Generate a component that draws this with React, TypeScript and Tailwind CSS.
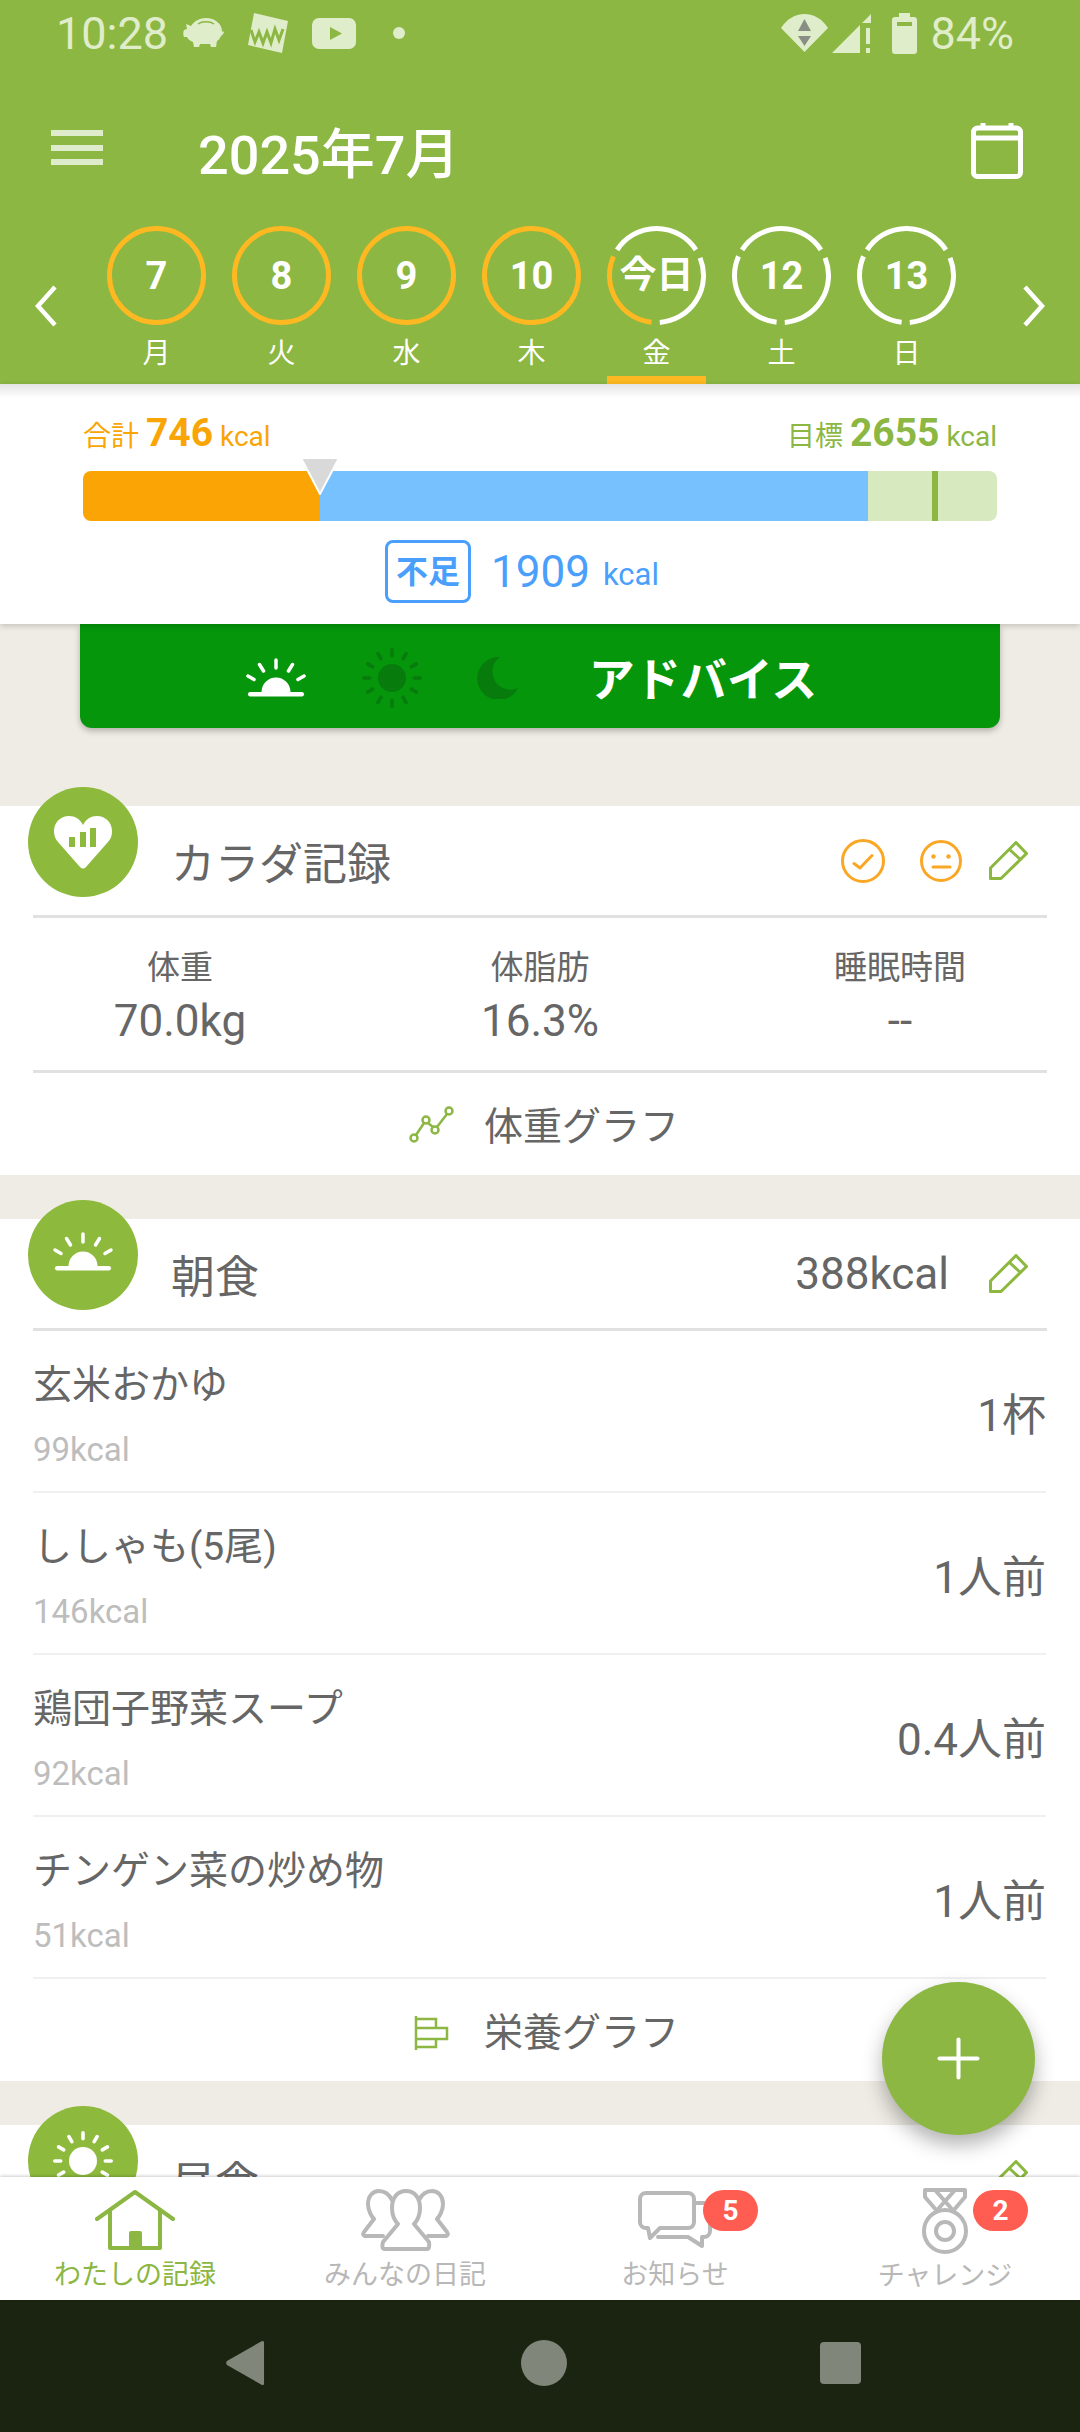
import React from "react";
import { Plus } from "lucide-react";

const days = [
  { d: "7", w: "月", state: "done" },
  { d: "8", w: "火", state: "done" },
  { d: "9", w: "水", state: "done" },
  { d: "10", w: "木", state: "done" },
  { d: "今日", w: "金", state: "today" },
  { d: "12", w: "土", state: "future" },
  { d: "13", w: "日", state: "future" },
];

const arc = (from: number, to: number, r = 47) => {
  const pt = (a: number) => {
    const rad = ((a - 90) * Math.PI) / 180;
    return `${49.5 + r * Math.cos(rad)} ${49.5 + r * Math.sin(rad)}`;
  };
  return `M${pt(from)} A${r} ${r} 0 0 1 ${pt(to)}`;
};

const Ring = ({ state }: { state: string }) => {
  const orange = "#fdb822";
  if (state === "done") {
    return (
      <svg width="99" height="99" className="absolute inset-0">
        <circle cx="49.5" cy="49.5" r="47" fill="none" stroke={orange} strokeWidth="5" />
      </svg>
    );
  }
  return (
    <svg width="99" height="99" className="absolute inset-0">
      <path d={arc(-57, 57)} fill="none" stroke="#fff" strokeWidth="5" />
      <path d={arc(68, 176)} fill="none" stroke="#fff" strokeWidth="5" />
      <path d={arc(186, 294)} fill="none" stroke={state === "today" ? orange : "#fff"} strokeWidth="5" />
    </svg>
  );
};

const Sunrise = ({ color }: { color: string }) => (
  <svg width="62" height="39" viewBox="0 0 62 39" fill={color} stroke="none">
    <path d="M16.500 34a14.500 14.500 0 0 1 29 0z" />
    <rect x="3" y="34" width="56" height="4.500" rx="2.200" />
    <g stroke={color} strokeWidth="3.500" strokeLinecap="round">
      <path d="M31 2v8M14.500 6.500l4 6.500M47.500 6.500l-4 6.500M3 18l6 3.500M59 18l-6 3.500" />
    </g>
  </svg>
);

const Sun = ({ color }: { color: string }) => (
  <svg width="62" height="62" viewBox="0 0 62 62" fill={color}>
    <circle cx="31" cy="31" r="14" />
    {[0, 30, 60, 90, 120, 150, 180, 210, 240, 270, 300, 330].map((a) => (
      <rect key={a} x="29.200" y="1" width="3.600" height="9.500" rx="1.800" transform={`rotate(${a} 31 31)`} />
    ))}
  </svg>
);

const EditIcon = () => (
  <svg width="39" height="39" viewBox="0 0 39 39" fill="none" stroke="#8cb83f" strokeWidth="3" strokeLinejoin="round">
    <path d="M1.500 27V37.500H12L37.500 12.500 27 1.500z" />
    <path d="M20 8l12 11" />
  </svg>
);

const SectionHeader = ({
  icon,
  title,
  right,
}: {
  icon: React.ReactNode;
  title: string;
  right: React.ReactNode;
}) => (
  <div className="relative h-[109px] bg-white">
    <div className="absolute left-[28px] top-[-19px] flex h-[110px] w-[110px] items-center justify-center rounded-full bg-[#8dba3c]">
      {icon}
    </div>
    <div className="flex h-[109px] items-center justify-between pl-[171px] pr-[52px]">
      <span className="pt-[8px] text-[44px] leading-none text-[#666666]">{title}</span>
      {right}
    </div>
  </div>
);

const foods = [
  { name: "玄米おかゆ", kcal: "99kcal", qty: "1杯" },
  { name: "ししゃも(5尾)", kcal: "146kcal", qty: "1人前" },
  { name: "鶏団子野菜スープ", kcal: "92kcal", qty: "0.4人前" },
  { name: "チンゲン菜の炒め物", kcal: "51kcal", qty: "1人前" },
];

export default function App() {
  return (
    <div className="relative flex h-[2432px] w-[1080px] flex-col overflow-hidden bg-[#efece5] font-['Roboto','Noto_Sans_CJK_JP',sans-serif]">
      {/* header */}
      <div className="h-[384px] shrink-0 bg-[#8bb742] text-white">
        <div className="flex h-[66px] items-center justify-between pl-[56px] pr-[66px] text-[#e0edcb]">
          <div className="flex items-center">
            <span className="text-[45px] leading-none">10:28</span>
            <svg width="41" height="30" viewBox="0 0 41 30" fill="#e0edcb" className="ml-[15px]">
              <path d="M8 8C11 3 17 0 23 0c9 0 16 6 16 13 0 1 2 1 2 0 0 3-2 4-3 5-1 2-2 4-4 5l-1 6h-5l-1-3H17l-1 3h-5l-1-5c-3-1-5-3-6-5H1c-1-2-1-5 0-7l3-1-1-5z" />
              <path d="M15 6c4-3 12-3 16 0" stroke="#8bb742" strokeWidth="1.500" fill="none" />
            </svg>
            <svg width="40" height="40" viewBox="0 0 40 40" className="ml-[24px]">
              <path d="M6 0 40 8 34 40 0 32z" fill="#e0edcb" />
              <path d="M3 17l4 12 4-10 4 11 4-11 4 11 4-14 4 11 4-11" stroke="#8bb742" strokeWidth="3" fill="none" />
            </svg>
            <svg width="44" height="31" viewBox="0 0 44 31" className="ml-[24px]">
              <rect width="44" height="31" rx="7" fill="#e0edcb" />
              <path d="M18 9v13l12-6.500z" fill="#8bb742" />
            </svg>
            <div className="ml-[37px] h-[12px] w-[12px] rounded-full bg-[#e0edcb]" />
          </div>
          <div className="flex items-center">
            <svg width="47" height="38" viewBox="0 0 47 38">
              <path d="M0 14C6 5 14 0 23.500 0S41 5 47 14L23.500 38z" fill="#e0edcb" />
              <path d="M23.500 5 30 17H17zM17 22h13l-6.500 10z" fill="#8a8f86" />
            </svg>
            <svg width="39" height="39" viewBox="0 0 39 39" fill="#e0edcb" className="ml-[4px]">
              <path d="M0 39 28 11v28zM30 9 39 0v9z" />
              <rect x="34" y="14" width="4" height="16" />
              <rect x="34" y="34" width="4" height="5" />
            </svg>
            <svg width="25" height="41" viewBox="0 0 25 41" className="ml-[21px]">
              <path d="M7 0h11v4h4a3 3 0 0 1 3 3v31a3 3 0 0 1-3 3H3a3 3 0 0 1-3-3V7a3 3 0 0 1 3-3h4z" fill="#e0edcb" />
              <rect x="5" y="9" width="15" height="4" fill="#8bb742" />
            </svg>
            <span className="ml-[13px] text-[45px] leading-none">84%</span>
          </div>
        </div>

        <div className="mt-[27px] flex h-[115px] items-center justify-between pl-[51px] pr-[57px]">
          <div className="flex items-center">
            <div className="mb-[6px] flex h-[35px] w-[52px] flex-col justify-between">
              <div className="h-[6px] bg-[#dfeccb]" />
              <div className="h-[6px] bg-[#dfeccb]" />
              <div className="h-[6px] bg-[#dfeccb]" />
            </div>
            <span className="ml-[95px] mt-[10px] text-[54px] font-medium leading-none">2025年7月</span>
          </div>
          <svg width="52" height="56" viewBox="0 0 52 56" fill="none" stroke="#fff" strokeWidth="5">
            <rect x="2.500" y="5" width="47" height="48.500" rx="4" />
            <path d="M2.500 15h47" />
            <path d="M12 0v7M40 0v7" />
          </svg>
        </div>

        <div className="flex h-[176px] pt-[18px]">
          <div className="relative w-[94px]">
            <svg width="26" height="44" viewBox="0 0 26 44" fill="none" stroke="#fff" strokeWidth="4.500" className="absolute left-[33px] top-[58px]">
              <path d="M22 3 5 22l17 19" />
            </svg>
          </div>
          {days.map((day) => (
            <div key={day.w} className="relative flex w-[125px] flex-col items-center">
              <div className="relative flex h-[99px] w-[99px] items-center justify-center">
                <Ring state={day.state} />
                <span className={`${day.state === "today" ? "text-[37px]" : "text-[38px]"} font-bold leading-none`}>{day.d}</span>
              </div>
              <span className="mt-[15px] text-[28px] leading-none">{day.w}</span>
              {day.state === "today" && <div className="absolute left-[13px] top-[150px] h-[8px] w-[99px] bg-[#fdb822]" />}
            </div>
          ))}
          <div className="relative flex-1">
            <svg width="26" height="44" viewBox="0 0 26 44" fill="none" stroke="#fff" strokeWidth="4.500" className="absolute left-[52px] top-[58px]">
              <path d="M4 3l17 19L4 41" />
            </svg>
          </div>
        </div>
      </div>

      {/* kcal summary */}
      <div className="relative z-10 h-[240px] shrink-0 bg-white px-[83px] pt-[30px] shadow-[0_2px_6px_rgba(0,0,0,0.18)]">
        <div className="pointer-events-none absolute inset-x-0 top-0 h-[14px] bg-gradient-to-b from-[#e4e4e4] to-white" />
        <div className="relative flex items-end justify-between leading-none">
          <div className="text-[#f9a505]">
            <span className="text-[28px]">合計 </span>
            <span className="text-[39px] font-bold">746</span>
            <span className="text-[28px]"> kcal</span>
          </div>
          <div className="text-[#8bb742]">
            <span className="text-[28px]">目標 </span>
            <span className="text-[39px] font-bold">2655</span>
            <span className="text-[28px]"> kcal</span>
          </div>
        </div>
        <div className="relative mt-[18px] flex h-[50px] overflow-hidden rounded-[8px]">
          <div className="w-[237px] bg-[#faa505]" />
          <div className="w-[548px] bg-[#77c1ff]" />
          <div className="flex-1 bg-[#d7eabf]" />
          <div className="absolute left-[849px] top-0 h-full w-[6px] bg-[#8bb742]" />
        </div>
        <svg width="40" height="38" viewBox="0 0 40 38" className="absolute left-[300px] top-[73px]">
          <path d="M1 1h38L20 37z" fill="#d9d9d9" stroke="#fff" strokeWidth="2" />
        </svg>
        <div className="mt-[19px] flex items-center justify-center pr-[36px]">
          <span className="flex h-[63px] w-[86px] items-center justify-center rounded-[8px] border-[3px] border-[#4a9ffc] text-[32px] font-bold leading-none text-[#4a9ffc]">不足</span>
          <span className="ml-[20px] text-[44px] leading-none text-[#4a9ffc]">1909</span>
          <span className="ml-[13px] mt-[5px] text-[31px] leading-none text-[#4a9ffc]">kcal</span>
        </div>
      </div>

      {/* scroll area */}
      <div className="min-h-0 flex-1 overflow-hidden">
        <div className="mx-[80px] flex h-[104px] items-center justify-center rounded-b-[12px] bg-[#05960b] pr-[18px] pt-[3px] shadow-[0_3px_6px_rgba(0,0,0,0.25)]">
          <Sunrise color="#ffffff" />
          <div className="ml-[54px]">
            <Sun color="#077c0d" />
          </div>
          <svg width="41" height="43" viewBox="0 0 41 43" fill="#077c0d" className="ml-[54px]">
            <path d="M23 1A21.500 21.500 0 1 0 41 32 18 18 0 0 1 23 1z" />
          </svg>
          <span className="ml-[71px] mt-[5px] text-[46px] font-bold leading-none text-white">アドバイス</span>
        </div>

        {/* body record */}
        <div className="mt-[78px] bg-white">
          <SectionHeader
            title="カラダ記録"
            icon={
              <svg width="58" height="53" viewBox="0 0 58 53">
                <path d="M29 9C26 3 21 0 15 0 6 0 0 7 0 15c0 4 1 8 4 11l22 25c2 2 4 2 6 0l22-25c3-3 4-7 4-11 0-8-6-15-15-15-6 0-11 3-14 9z" fill="#fff" />
                <rect x="15" y="21" width="6" height="10" fill="#8dba3c" />
                <rect x="26" y="16" width="6" height="15" fill="#8dba3c" />
                <rect x="36" y="12" width="6" height="19" fill="#8dba3c" />
              </svg>
            }
            right={
              <div className="flex items-center">
                <svg width="44" height="44" viewBox="0 0 44 44" fill="none" stroke="#fba726" strokeWidth="3" strokeLinecap="round" strokeLinejoin="round">
                  <circle cx="22" cy="22" r="20.500" />
                  <path d="M13 24.500 19 29 31 16.500" />
                </svg>
                <svg width="42" height="42" viewBox="0 0 42 42" fill="none" stroke="#fba726" strokeWidth="3" strokeLinecap="round" className="ml-[35px]">
                  <circle cx="21" cy="21" r="19.500" />
                  <path d="M13 27h17" />
                  <circle cx="13.500" cy="16.500" r="2.200" fill="#fba726" stroke="none" />
                  <circle cx="28.500" cy="16.500" r="2.200" fill="#fba726" stroke="none" />
                </svg>
                <div className="ml-[27px]">
                  <EditIcon />
                </div>
              </div>
            }
          />
          <div className="mx-[33px] h-[3px] bg-[#e1e1e1]" />
          <div className="grid h-[152px] grid-cols-3 content-center pt-[6px]">
            {[
              ["体重", "70.0kg"],
              ["体脂肪", "16.3%"],
              ["睡眠時間", "--"],
            ].map(([label, value]) => (
              <div key={label} className="flex flex-col items-center text-[#666666]">
                <span className="text-[33px] leading-none">{label}</span>
                <span className="mt-[15px] text-[44px] leading-none">{value}</span>
              </div>
            ))}
          </div>
          <div className="mx-[33px] h-[3px] bg-[#e1e1e1]" />
          <div className="flex h-[102px] items-center justify-center pl-[8px] pt-[6px]">
            <svg width="45" height="38" viewBox="0 0 45 38" fill="none" stroke="#8bb742" strokeWidth="2.500" className="mb-[4px]">
              <circle cx="5" cy="32" r="3.500" />
              <circle cx="17" cy="14" r="3.500" />
              <circle cx="26" cy="24" r="3.500" />
              <circle cx="40" cy="5" r="3.500" />
              <path d="M7 29 15 17M19 17 24 21M28 21 38 8" />
            </svg>
            <span className="ml-[30px] text-[39px] leading-none text-[#666666]">体重グラフ</span>
          </div>
        </div>

        {/* breakfast */}
        <div className="mt-[44px] bg-white">
          <SectionHeader
            title="朝食"
            icon={
              <div className="mb-[8px]">
                <Sunrise color="#ffffff" />
              </div>
            }
            right={
              <div className="flex items-center">
                <span className="text-[44px] leading-none text-[#666666]">388kcal</span>
                <div className="ml-[40px]">
                  <EditIcon />
                </div>
              </div>
            }
          />
          <div className="mx-[33px] h-[3px] bg-[#e1e1e1]" />
          {foods.map((food) => (
            <div key={food.name} className="ml-[33px] mr-[34px] flex h-[162px] items-center justify-between border-b-[2px] border-[#f0f0f0] pt-[10px]">
              <div className="flex flex-col">
                <span className="text-[39px] leading-none text-[#666666]">{food.name}</span>
                <span className="mt-[28px] text-[33px] leading-none text-[#bdbdbd]">{food.kcal}</span>
              </div>
              <span className="text-[44px] leading-none text-[#666666]">{food.qty}</span>
            </div>
          ))}
          <div className="flex h-[102px] items-center justify-center pl-[13px] pt-[6px]">
            <svg width="35" height="34" viewBox="0 0 35 34" fill="none" stroke="#8bb742" strokeWidth="2.500">
              <path d="M2 0v34M2 3h20v9H2M2 12h31v11H2M2 23h20v8H2" />
            </svg>
            <span className="ml-[35px] text-[39px] leading-none text-[#666666]">栄養グラフ</span>
          </div>
        </div>

        {/* lunch */}
        <div className="mt-[44px] bg-white">
          <SectionHeader
            title="昼食"
            icon={<Sun color="#ffffff" />}
            right={<EditIcon />}
          />
        </div>
      </div>

      {/* bottom tabs */}
      <div className="relative z-10 grid h-[123px] shrink-0 grid-cols-4 bg-white shadow-[0_-1px_3px_rgba(0,0,0,0.2)]">
        <div className="flex flex-col items-center pt-[13px]">
          <svg width="80" height="60" viewBox="0 0 80 60" fill="none" stroke="#8bb742" strokeWidth="4" strokeLinejoin="round" strokeLinecap="round">
            <path d="M2 29 40 2l38 27" />
            <path d="M15 21v37h50V21" />
            <path d="M36 58V43h9v15z" fill="#8bb742" />
          </svg>
          <span className="mt-[12px] text-[27px] leading-none text-[#8bb742]">わたしの記録</span>
        </div>
        <div className="flex flex-col items-center pt-[11px]">
          <svg width="89" height="64" viewBox="0 0 89 64" fill="none" stroke="#b8b8b8" strokeWidth="4" strokeLinejoin="round" strokeLinecap="round">
            <path d="M31 20C31 9 37 3 45 3S59 9 59 20C59 27 56 33 53 36L68 54Q69 61 66 61H24Q20 61 22 54L37 36C34 33 31 27 31 20z" />
            <path d="M31 12C28 6 23 3 18 3 12 3 7 8 7 16 7 23 11 29 13 31L3 44Q1 47 4 48H22" />
            <path d="M58 12C61 6 66 3 71 3 77 3 82 8 82 16 82 23 78 29 76 31L86 44Q88 47 85 48H67" />
          </svg>
          <span className="mt-[10px] text-[27px] leading-none text-[#b8b8b8]">みんなの日記</span>
        </div>
        <div className="relative flex flex-col items-center pt-[14px]">
          <svg width="74" height="58" viewBox="0 0 74 58" fill="none" stroke="#b8b8b8" strokeWidth="4" strokeLinejoin="round" strokeLinecap="round">
            <path d="M8 2H50a6 6 0 0 1 6 6V31a6 6 0 0 1-6 6H22L12 47 10 37H8a6 6 0 0 1-6-6V8a6 6 0 0 1 6-6z" />
            <path d="M56 12H66a6 6 0 0 1 6 6V40a6 6 0 0 1-6 6H64V55L50 46H20" />
          </svg>
          <span className="mt-[13px] text-[27px] leading-none text-[#b8b8b8]">お知らせ</span>
          <div className="absolute left-[163px] top-[13px] flex h-[41px] w-[55px] items-center justify-center rounded-full bg-[#ff5d52] text-[28px] font-bold leading-none text-white">5</div>
        </div>
        <div className="relative flex flex-col items-center pt-[11px]">
          <svg width="46" height="66" viewBox="0 0 46 66" fill="none" stroke="#b8b8b8" strokeWidth="4" strokeLinejoin="round" strokeLinecap="round">
            <path d="M3 2H43V9L31 23M3 2V9L15 23" />
            <path d="M13 2 29 20M33 2 17 20" />
            <circle cx="23" cy="43" r="21" />
            <circle cx="23" cy="43" r="9" />
          </svg>
          <span className="mt-[9px] text-[27px] leading-none text-[#b8b8b8]">チャレンジ</span>
          <div className="absolute left-[163px] top-[13px] flex h-[41px] w-[55px] items-center justify-center rounded-full bg-[#ff5d52] text-[28px] font-bold leading-none text-white">2</div>
        </div>
      </div>

      {/* android nav */}
      <div className="flex h-[132px] shrink-0 items-center bg-[#1b2410] pb-[6px] pl-[225px]">
        <svg width="41" height="46" viewBox="0 0 42 46" fill="#81867a">
          <path d="M40 2v42c0 2-2 2-3 1L2 25c-1-1-1-3 0-4L37 1c1-1 3-1 3 1z" />
        </svg>
        <div className="ml-[255px] h-[46px] w-[46px] rounded-full bg-[#81867a]" />
        <div className="ml-[253px] h-[42px] w-[41px] rounded-[4px] bg-[#81867a]" />
      </div>

      {/* fab */}
      <div className="absolute left-[882px] top-[1982px] z-20 flex h-[153px] w-[153px] items-center justify-center rounded-full bg-[#8bb742] shadow-[0_10px_20px_rgba(0,0,0,0.3)]">
        <Plus size={65} color="#fff" strokeWidth={1.5} />
      </div>
    </div>
  );
}
